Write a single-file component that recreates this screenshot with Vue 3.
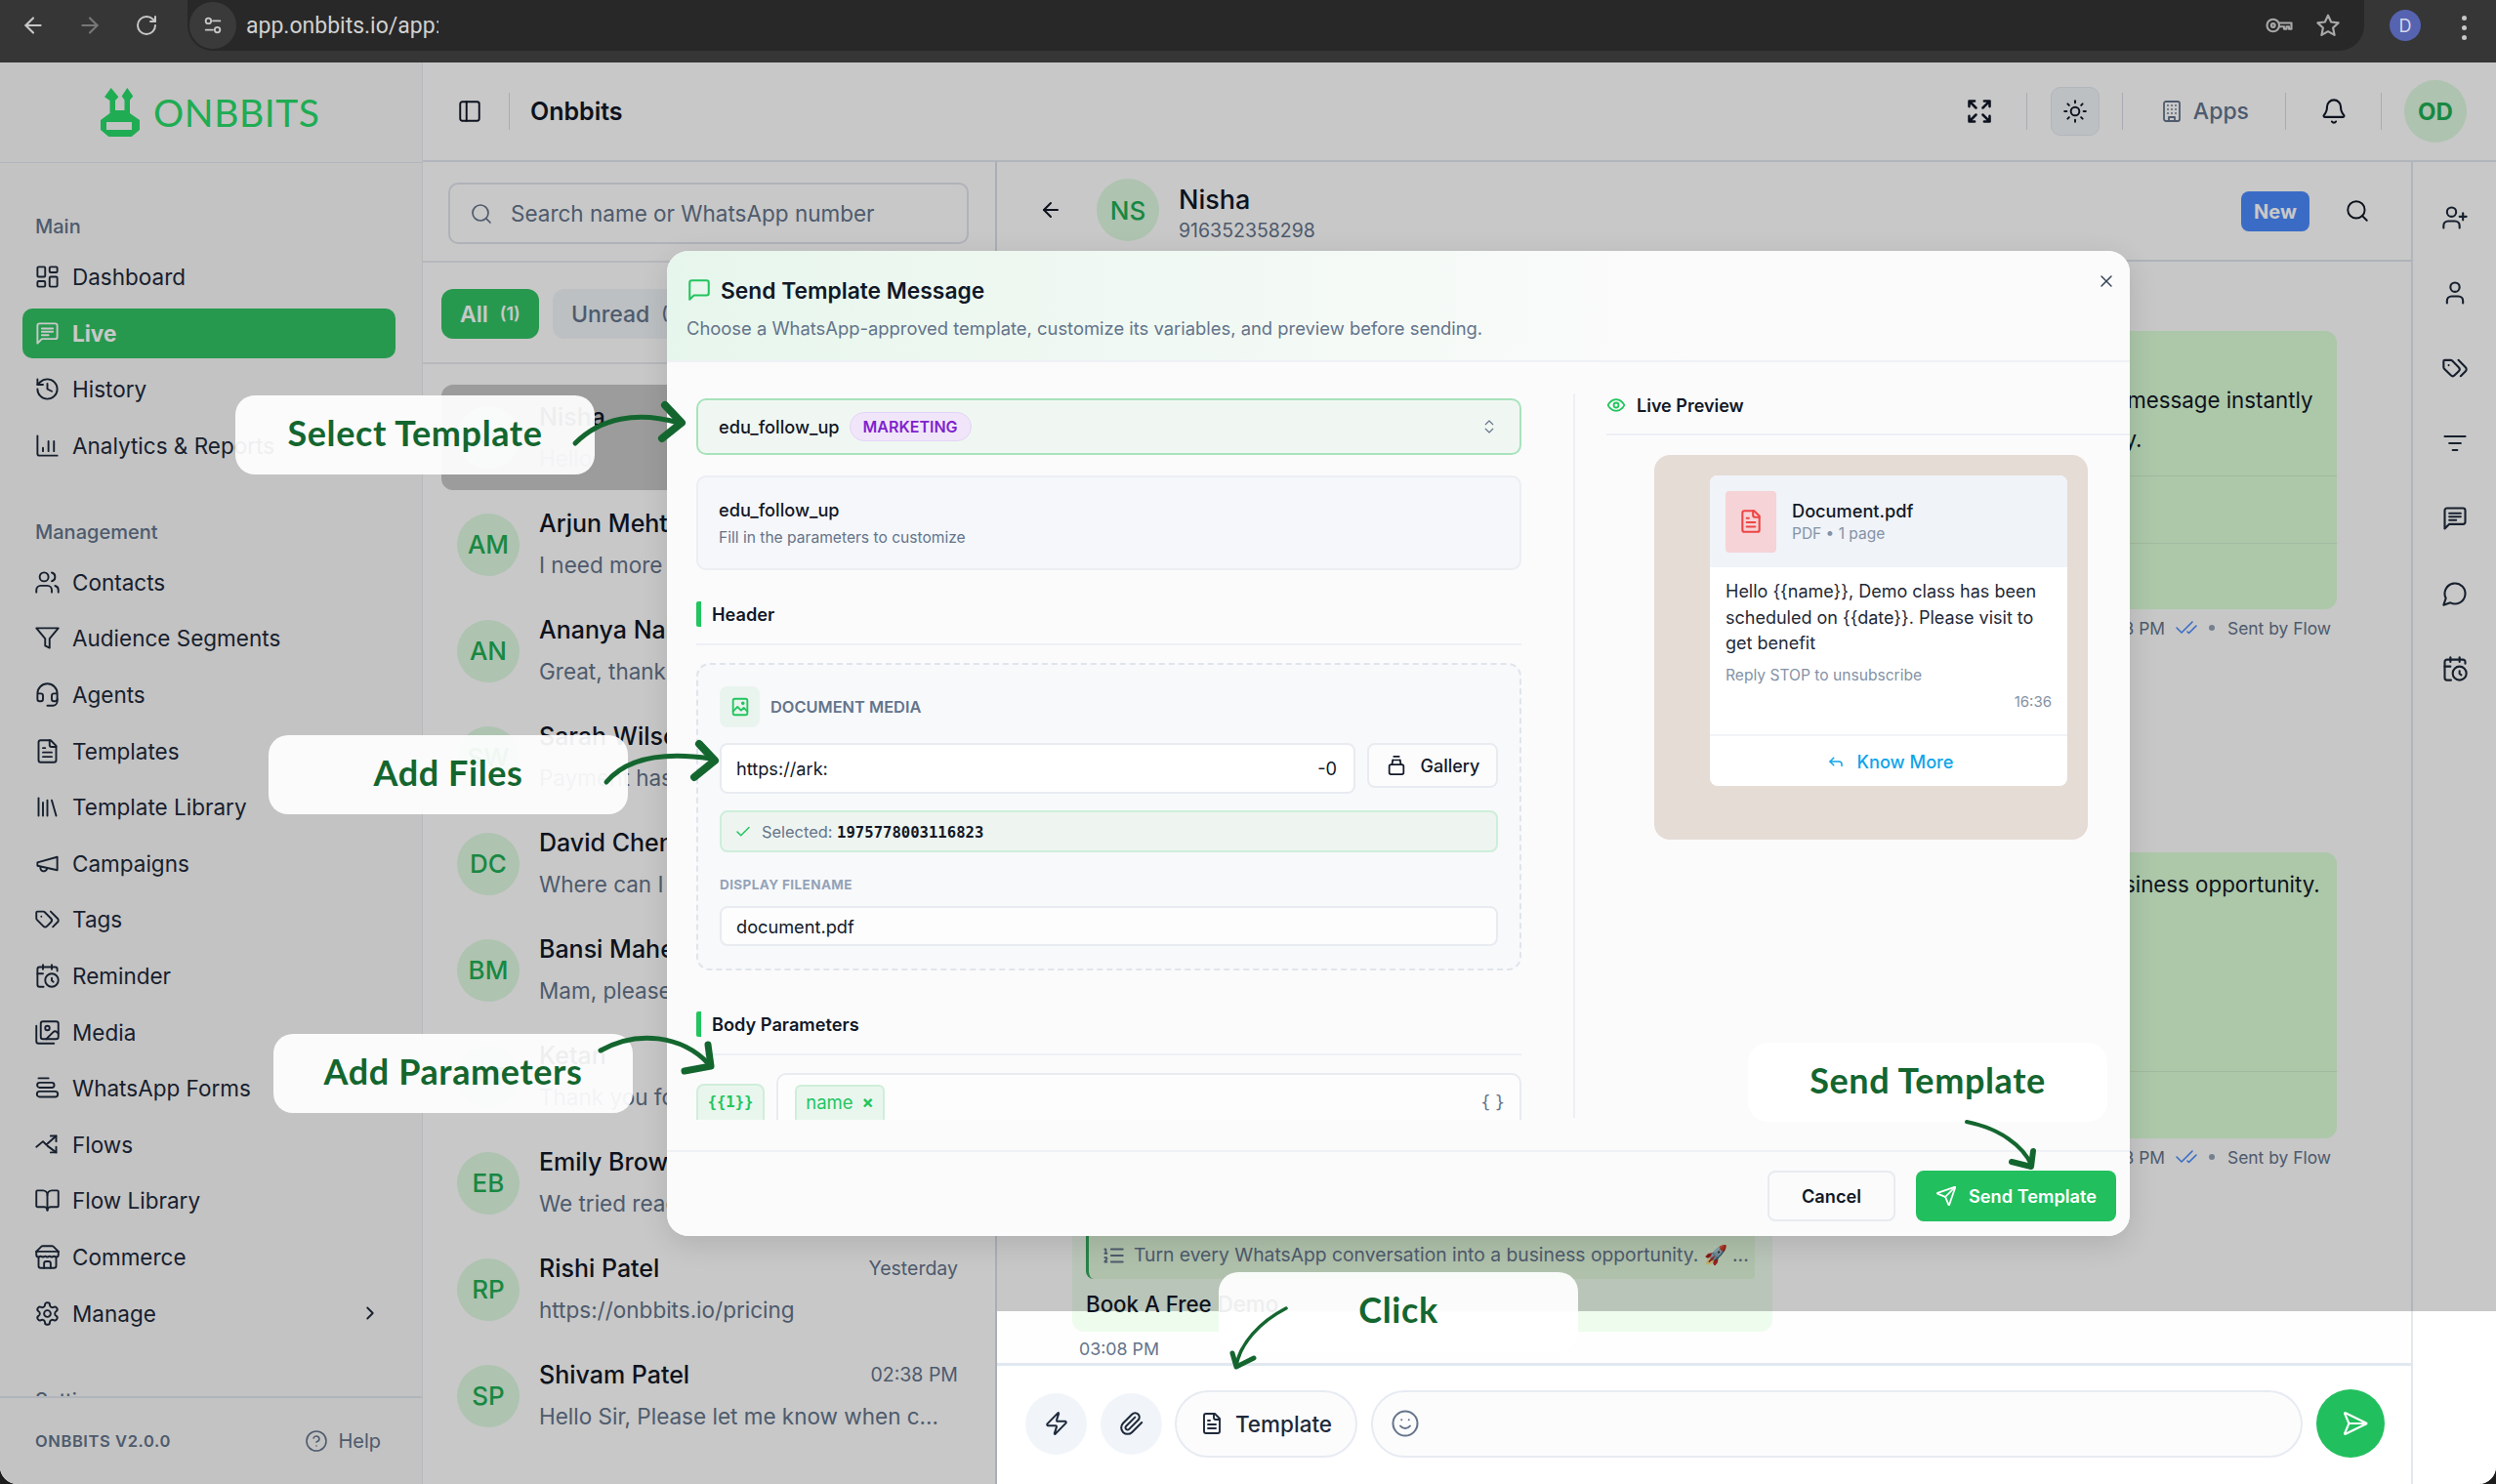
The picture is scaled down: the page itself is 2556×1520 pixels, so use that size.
<script setup>
import { h } from 'vue';

// circle as a path, keeps the icon table flat
const c = (x, y, r) => `M${x - r} ${y}a${r} ${r} 0 1 0 ${r * 2} 0a${r} ${r} 0 1 0 ${-r * 2} 0`;

const ICONS = {
  dashboard: ['M4 3h5a1 1 0 0 1 1 1v7a1 1 0 0 1-1 1H4a1 1 0 0 1-1-1V4a1 1 0 0 1 1-1z', 'M15 3h5a1 1 0 0 1 1 1v3a1 1 0 0 1-1 1h-5a1 1 0 0 1-1-1V4a1 1 0 0 1 1-1z', 'M15 12h5a1 1 0 0 1 1 1v7a1 1 0 0 1-1 1h-5a1 1 0 0 1-1-1v-7a1 1 0 0 1 1-1z', 'M4 16h5a1 1 0 0 1 1 1v3a1 1 0 0 1-1 1H4a1 1 0 0 1-1-1v-3a1 1 0 0 1 1-1z'],
  live: ['M21 15a2 2 0 0 1-2 2H7l-4 4V5a2 2 0 0 1 2-2h14a2 2 0 0 1 2 2z', 'M7 7.5h10', 'M7 10.5h10', 'M7 13.5h6'],
  history: ['M3 12a9 9 0 1 0 9-9 9.75 9.75 0 0 0-6.74 2.74L3 8', 'M3 3v5h5', 'M12 7v5l4 2'],
  chart: ['M3 3v16a2 2 0 0 0 2 2h16', 'M8 17v-3', 'M13 17V8', 'M18 17v-9'],
  users: ['M16 21v-2a4 4 0 0 0-4-4H6a4 4 0 0 0-4 4v2', c(9, 7, 4), 'M22 21v-2a4 4 0 0 0-3-3.87', 'M16 3.13a4 4 0 0 1 0 7.75'],
  funnel: ['M22 3H2l8 9.46V19l4 2v-8.54L22 3z'],
  headset: ['M3 11h3a2 2 0 0 1 2 2v3a2 2 0 0 1-2 2H5a2 2 0 0 1-2-2v-5Zm0 0a9 9 0 1 1 18 0m0 0v5a2 2 0 0 1-2 2h-1a2 2 0 0 1-2-2v-3a2 2 0 0 1 2-2h3Z', 'M21 16v2a4 4 0 0 1-4 4h-5'],
  file: ['M15 2H6a2 2 0 0 0-2 2v16a2 2 0 0 0 2 2h12a2 2 0 0 0 2-2V7Z', 'M14 2v4a2 2 0 0 0 2 2h4', 'M10 9H8', 'M16 13H8', 'M16 17H8'],
  library: ['m16 6 4 14', 'M12 6v14', 'M8 8v12', 'M4 4v16'],
  megaphone: ['m3 11 18-5v12L3 14v-3z', 'M11.6 16.8a3 3 0 1 1-5.8-1.6'],
  tags: ['m15 5 6.3 6.3a2.4 2.4 0 0 1 0 3.4L17 19', 'M9.586 5.586A2 2 0 0 0 8.172 5H3a1 1 0 0 0-1 1v5.172a2 2 0 0 0 .586 1.414L8.29 18.29a2.426 2.426 0 0 0 3.42 0l3.58-3.58a2.426 2.426 0 0 0 0-3.42z', 'M6.5 9.5h.01'],
  calendar: ['M21 7.5V6a2 2 0 0 0-2-2H5a2 2 0 0 0-2 2v14a2 2 0 0 0 2 2h3.5', 'M16 2v4', 'M8 2v4', 'M3 10h5', 'M17.5 17.5 16 16.3V14', c(16, 16, 6)],
  images: ['M18 22H4a2 2 0 0 1-2-2V6', 'm22 13-1.296-1.296a2.41 2.41 0 0 0-3.408 0L11 18', c(12, 8, 2), 'M8 2h12a2 2 0 0 1 2 2v12a2 2 0 0 1-2 2H8a2 2 0 0 1-2-2V4a2 2 0 0 1 2-2z'],
  forms: ['M4 3h9', 'M5 7h11a2 2 0 0 1 0 4.5H5A2 2 0 0 1 5 7z', 'M5 15h14a2 2 0 0 1 0 5H5a2 2 0 0 1 0-5z'],
  flows: ['M2 14l6-5 3 3 9-8', 'M15 4h5v5', 'M12 13l8 6', 'M20 14v5h-5'],
  book: ['M12 7v14', 'M3 18a1 1 0 0 1-1-1V4a1 1 0 0 1 1-1h5a4 4 0 0 1 4 4 4 4 0 0 1 4-4h5a1 1 0 0 1 1 1v13a1 1 0 0 1-1 1h-6a3 3 0 0 0-3 3 3 3 0 0 0-3-3z'],
  store: ['m2 7 4.41-4.41A2 2 0 0 1 7.83 2h8.34a2 2 0 0 1 1.42.59L22 7', 'M4 12v8a2 2 0 0 0 2 2h12a2 2 0 0 0 2-2v-8', 'M15 22v-4a2 2 0 0 0-2-2h-2a2 2 0 0 0-2 2v4', 'M2 7h20', 'M22 7v3a2 2 0 0 1-2 2a2.7 2.7 0 0 1-1.59-.63.7.7 0 0 0-.82 0A2.7 2.7 0 0 1 16 12a2.7 2.7 0 0 1-1.59-.63.7.7 0 0 0-.82 0A2.7 2.7 0 0 1 12 12a2.7 2.7 0 0 1-1.59-.63.7.7 0 0 0-.82 0A2.7 2.7 0 0 1 8 12a2.7 2.7 0 0 1-1.59-.63.7.7 0 0 0-.82 0A2.7 2.7 0 0 1 4 12a2 2 0 0 1-2-2V7'],
  settings: ['M12.22 2h-.44a2 2 0 0 0-2 2v.18a2 2 0 0 1-1 1.73l-.43.25a2 2 0 0 1-2 0l-.15-.08a2 2 0 0 0-2.73.73l-.22.38a2 2 0 0 0 .73 2.73l.15.1a2 2 0 0 1 1 1.72v.51a2 2 0 0 1-1 1.74l-.15.09a2 2 0 0 0-.73 2.73l.22.38a2 2 0 0 0 2.73.73l.15-.08a2 2 0 0 1 2 0l.43.25a2 2 0 0 1 1 1.73V20a2 2 0 0 0 2 2h.44a2 2 0 0 0 2-2v-.18a2 2 0 0 1 1-1.73l.43-.25a2 2 0 0 1 2 0l.15.08a2 2 0 0 0 2.73-.73l.22-.39a2 2 0 0 0-.73-2.73l-.15-.08a2 2 0 0 1-1-1.74v-.5a2 2 0 0 1 1-1.74l.15-.09a2 2 0 0 0 .73-2.73l-.22-.38a2 2 0 0 0-2.73-.73l-.15.08a2 2 0 0 1-2 0l-.43-.25a2 2 0 0 1-1-1.73V4a2 2 0 0 0-2-2z', c(12, 12, 3)],
  chevronRight: ['m9 18 6-6-6-6'],
  help: [c(12, 12, 10), 'M9.09 9a3 3 0 0 1 5.83 1c0 2-3 3-3 3', 'M12 17h.01'],
  search: [c(11, 11, 8), 'm21 21-4.3-4.3'],
  arrowLeft: ['m12 19-7-7 7-7', 'M19 12H5'],
  panel: ['M5 3h14a2 2 0 0 1 2 2v14a2 2 0 0 1-2 2H5a2 2 0 0 1-2-2V5a2 2 0 0 1 2-2z', 'M9 3v18'],
  expand: ['m21 21-6-6m6 6v-4.8m0 4.8h-4.8', 'M3 16.2V21m0 0h4.8M3 21l6-6', 'M21 7.8V3m0 0h-4.8M21 3l-6 6', 'M3 7.8V3m0 0h4.8M3 3l6 6'],
  sun: [c(12, 12, 4), 'M12 2v2', 'M12 20v2', 'm4.93 4.93 1.41 1.41', 'm17.66 17.66 1.41 1.41', 'M2 12h2', 'M20 12h2', 'm6.34 17.66-1.41 1.41', 'm19.07 4.93-1.41 1.41'],
  building: ['M6 2h12a2 2 0 0 1 2 2v16a2 2 0 0 1-2 2H6a2 2 0 0 1-2-2V4a2 2 0 0 1 2-2z', 'M9 22v-4h6v4', 'M8 6h.01', 'M16 6h.01', 'M12 6h.01', 'M12 10h.01', 'M12 14h.01', 'M16 10h.01', 'M16 14h.01', 'M8 10h.01', 'M8 14h.01'],
  bell: ['M10.268 21a2 2 0 0 0 3.464 0', 'M3.262 15.326A1 1 0 0 0 4 17h16a1 1 0 0 0 .74-1.673C19.41 13.956 18 12.499 18 8A6 6 0 0 0 6 8c0 4.499-1.411 5.956-2.738 7.326'],
  userPlus: ['M16 21v-2a4 4 0 0 0-4-4H6a4 4 0 0 0-4 4v2', c(9, 7, 4), 'M19 8v6', 'M22 11h-6'],
  user: ['M19 21v-2a4 4 0 0 0-4-4H9a4 4 0 0 0-4 4v2', c(12, 7, 4)],
  filter: ['M3 6h18', 'M7 12h10', 'M10 18h4'],
  chat: ['M7.9 20A9 9 0 1 0 4 16.1L2 22Z'],
  message: ['M21 15a2 2 0 0 1-2 2H7l-4 4V5a2 2 0 0 1 2-2h14a2 2 0 0 1 2 2z'],
  chevrons: ['m7 15 5 5 5-5', 'm7 9 5-5 5 5'],
  close: ['M18 6 6 18', 'm6 6 12 12'],
  check: ['M20 6 9 17l-5-5'],
  checks: ['M18 6 7 17l-5-5', 'm22 10-7.5 7.5L13 16'],
  eye: ['M2 12s3-7 10-7 10 7 10 7-3 7-10 7-10-7-10-7Z', c(12, 12, 3)],
  image: ['M6 3h12a2 2 0 0 1 2 2v14a2 2 0 0 1-2 2H6a2 2 0 0 1-2-2V5a2 2 0 0 1 2-2z', 'M4 17l5-5 4 4 3-3 4 4', c(15, 8, 1)],
  jar: ['M6 11h12a2 2 0 0 1 2 2v7a2 2 0 0 1-2 2H6a2 2 0 0 1-2-2v-7a2 2 0 0 1 2-2z', 'M7 11l1-5', 'M17 11l-1-5', 'M8 6h8', 'M9 2h6'],
  reply: ['M20 18v-2a4 4 0 0 0-4-4H4', 'M9 17l-5-5 5-5'],
  send: ['M14.536 21.686a.5.5 0 0 0 .937-.024l6.5-19a.496.496 0 0 0-.635-.635l-19 6.5a.5.5 0 0 0-.024.937l7.93 3.18a2 2 0 0 1 1.112 1.11z', 'M21.854 2.147l-10.94 10.939'],
  bolt: ['M4 14a1 1 0 0 1-.78-1.63l9.9-10.2a.5.5 0 0 1 .86.46l-1.92 6.02A1 1 0 0 0 13 10h7a1 1 0 0 1 .78 1.63l-9.9 10.2a.5.5 0 0 1-.86-.46l1.92-6.02A1 1 0 0 0 11 14z'],
  clip: ['m21.44 11.05-9.19 9.19a6 6 0 0 1-8.49-8.49l8.57-8.57A4 4 0 1 1 18 8.84l-8.59 8.57a2 2 0 0 1-2.83-2.83l8.49-8.48'],
  smile: [c(12, 12, 10), 'M8 14s1.5 2 4 2 4-2 4-2', 'M9 9h.01', 'M15 9h.01'],
  ordered: ['M10 12h11', 'M10 18h11', 'M10 6h11', 'M4 10h2', 'M4 6h1v4', 'M6 18H4c0-1 2-2 2-3s-1-1.5-2-1'],
  reload: ['M21 12a9 9 0 1 1-9-9c2.52 0 4.93 1 6.74 2.74L21 8', 'M21 3v5h-5'],
  arrowRight: ['M5 12h14', 'm12 5 7 7-7 7'],
  tune: ['M12 7h8', 'M4 17h8', c(7, 7, 3), c(17, 17, 3)],
  key: [c(7, 12, 5), c(7, 12, 1.5), 'M12 10h10v5h-2v-2h-2v2h-2v-2h-4'],
  star: ['M12 2.5l2.9 6.3 6.9.8-5.1 4.7 1.4 6.8-6.1-3.4-6.1 3.4 1.4-6.8L2.2 9.6l6.9-.8z'],
};

const Ico = (props) =>
  h(
    'svg',
    {
      width: props.size || 24,
      height: props.size || 24,
      viewBox: '0 0 24 24',
      fill: 'none',
      stroke: 'currentColor',
      'stroke-width': props.sw || 2,
      'stroke-linecap': 'round',
      'stroke-linejoin': 'round',
    },
    ICONS[props.name].map((d) => h('path', { d })),
  );
Ico.props = ['name', 'size', 'sw'];

const menuMain = [
  { label: 'Dashboard', icon: 'dashboard' },
  { label: 'Live', icon: 'live', active: true },
  { label: 'History', icon: 'history' },
  { label: 'Analytics & Reports', icon: 'chart' },
];
const menuManage = [
  { label: 'Contacts', icon: 'users' },
  { label: 'Audience Segments', icon: 'funnel' },
  { label: 'Agents', icon: 'headset' },
  { label: 'Templates', icon: 'file' },
  { label: 'Template Library', icon: 'library' },
  { label: 'Campaigns', icon: 'megaphone' },
  { label: 'Tags', icon: 'tags' },
  { label: 'Reminder', icon: 'calendar' },
  { label: 'Media', icon: 'images' },
  { label: 'WhatsApp Forms', icon: 'forms' },
  { label: 'Flows', icon: 'flows' },
  { label: 'Flow Library', icon: 'book' },
  { label: 'Commerce', icon: 'store' },
  { label: 'Manage', icon: 'settings', more: true },
];

const chats = [
  { ini: 'NS', name: 'Nisha', text: 'Hello', time: '03:08 PM', selected: true },
  { ini: 'AM', name: 'Arjun Mehta', text: 'I need more details', time: '03:02 PM' },
  { ini: 'AN', name: 'Ananya Nair', text: 'Great, thank you!', time: '02:58 PM' },
  { ini: 'SW', name: 'Sarah Wilson', text: 'Payment has been done', time: '02:55 PM' },
  { ini: 'DC', name: 'David Chen', text: 'Where can I find it?', time: '02:51 PM' },
  { ini: 'BM', name: 'Bansi Mahera', text: 'Mam, please call me', time: '02:49 PM' },
  { ini: 'KT', name: 'Ketan', text: 'Thank you for the update', time: '02:47 PM' },
  { ini: 'EB', name: 'Emily Brown', text: 'We tried reaching you', time: '02:44 PM' },
  { ini: 'RP', name: 'Rishi Patel', text: 'https://onbbits.io/pricing', time: 'Yesterday' },
  { ini: 'SP', name: 'Shivam Patel', text: 'Hello Sir, Please let me know when c...', time: '02:38 PM' },
];

const railIcons = ['userPlus', 'user', 'tags', 'filter', 'live', 'chat', 'calendar'];
</script>

<template>
  <div class="page">
    <div class="chrome">
      <span class="nav-ico"><Ico name="arrowLeft" :size="26" /></span>
      <span class="nav-ico faded"><Ico name="arrowRight" :size="26" /></span>
      <span class="nav-ico"><Ico name="reload" :size="24" /></span>
      <div class="url-pill">
        <span class="site-btn"><Ico name="tune" :size="22" /></span>
        <span class="url-text">app.onbbits.io/app:</span>
        <span class="pill-ico first"><Ico name="key" :size="30" :sw="1.7" /></span>
        <span class="pill-ico"><Ico name="star" :size="26" /></span>
      </div>
      <span class="profile">D</span>
      <span class="dots"><i></i><i></i><i></i></span>
    </div>

    <div class="app">
      <aside class="sidebar">
        <div class="logo">
          <svg width="40" height="50" viewBox="0 0 40 50">
            <path class="logo-fill" d="M10.7 0L18.3 9.3L15 13V24H9.5V13L4 9.3ZM27.3 0L33.3 8.5L30 12.5V24H24.5V12.5L21.7 8.5ZM9.5 23H30V26L40 33V43L31.7 50H8.3L0 43V33L9.5 26Z" />
            <rect x="6" y="35" width="26" height="8" fill="#f9f9f9" />
          </svg>
          <span class="logo-text">ONBBITS</span>
        </div>
        <nav class="nav">
          <div class="nav-label">Main</div>
          <div v-for="m in menuMain" :key="m.label" class="nav-item" :class="{ active: m.active }">
            <Ico :name="m.icon" :size="27" :sw="1.7" />
            <span>{{ m.label }}</span>
          </div>
          <div class="nav-label second">Management</div>
          <div v-for="m in menuManage" :key="m.label" class="nav-item">
            <Ico :name="m.icon" :size="27" :sw="1.7" />
            <span>{{ m.label }}</span>
            <span v-if="m.more" class="more"><Ico name="chevronRight" :size="22" /></span>
          </div>
          <div class="nav-label second">Settings</div>
        </nav>
        <div class="side-foot">
          <span class="version">ONBBITS V2.0.0</span>
          <span class="help"><Ico name="help" :size="24" :sw="1.6" />Help</span>
        </div>
      </aside>

      <div class="main">
        <header class="topbar">
          <Ico name="panel" :size="26" :sw="1.8" />
          <i class="top-div"></i>
          <span class="brand">Onbbits</span>
          <span class="top-right">
            <Ico name="expand" :size="28" :sw="2.2" />
            <i class="sep s1"></i>
            <span class="sun"><Ico name="sun" :size="26" :sw="1.8" /></span>
            <i class="sep s2"></i>
            <span class="apps"><Ico name="building" :size="24" :sw="1.8" />Apps</span>
            <i class="sep s3"></i>
            <Ico name="bell" :size="28" :sw="1.8" />
            <i class="sep s4"></i>
            <span class="me">OD</span>
          </span>
        </header>

        <div class="content">
          <section class="list">
            <div class="list-search">
              <div class="search-box">
                <Ico name="search" :size="24" :sw="1.7" />
                <span>Search name or WhatsApp number</span>
              </div>
            </div>
            <div class="tabs">
              <span class="tab on">All <small>(1)</small></span>
              <span class="tab">Unread <small>(0)</small></span>
            </div>
            <div class="rows">
              <div v-for="ch in chats" :key="ch.ini" class="row" :class="{ sel: ch.selected }">
                <span class="avatar">{{ ch.ini }}</span>
                <div class="row-text">
                  <div class="row-top">
                    <span class="row-name">{{ ch.name }}</span>
                    <span class="row-time">{{ ch.time }}</span>
                  </div>
                  <div class="row-sub">{{ ch.text }}</div>
                </div>
              </div>
            </div>
          </section>

          <section class="chat">
            <div class="chat-head">
              <span class="back"><Ico name="arrowLeft" :size="24" /></span>
              <span class="avatar">NS</span>
              <div class="who">
                <div class="who-name">Nisha</div>
                <div class="who-num">916352358298</div>
              </div>
              <span class="new">New</span>
              <span class="head-search"><Ico name="search" :size="26" :sw="1.8" /></span>
            </div>

            <div class="messages">
              <div class="bubble b1">
                <p class="b1-text">Respond to every customer message instantly<br />from one team inbox any day.</p>
                <div class="b-row"></div>
                <div class="b-row"></div>
              </div>
              <div class="meta">
                <span>03:38 PM</span>
                <span class="ticks"><Ico name="checks" :size="24" :sw="1.6" /></span>
                <i class="dot"></i>
                <span>Sent by Flow</span>
              </div>
              <div class="bubble b2">
                <p class="b2-text">Turn every WhatsApp conversation into a business opportunity.</p>
                <div class="b-row"></div>
              </div>
              <div class="meta">
                <span>03:38 PM</span>
                <span class="ticks"><Ico name="checks" :size="24" :sw="1.6" /></span>
                <i class="dot"></i>
                <span>Sent by Flow</span>
              </div>
              <div class="bubble b3">
                <div class="quote">
                  <Ico name="ordered" :size="26" :sw="1.7" />
                  <span>Turn every WhatsApp conversation into a business opportunity. 🚀 ...</span>
                </div>
                <div class="b3-text">Book A Free Demo</div>
              </div>
              <div class="b3-time">03:08 PM</div>
            </div>

            <div class="composer">
              <span class="round"><Ico name="bolt" :size="26" :sw="1.9" /></span>
              <span class="round"><Ico name="clip" :size="26" :sw="1.9" /></span>
              <span class="tpl"><Ico name="file" :size="24" :sw="1.9" />Template</span>
              <div class="type-box"><Ico name="smile" :size="30" :sw="1.6" /></div>
              <span class="send"><Ico name="send" :size="28" :sw="1.9" /></span>
            </div>
          </section>

          <aside class="rail">
            <Ico v-for="r in railIcons" :key="r" :name="r" :size="28" :sw="1.8" />
          </aside>
        </div>
      </div>

      <div class="dim"></div>

      <div class="modal">
        <div class="m-head">
          <div class="m-title">
            <Ico name="message" :size="26" :sw="1.9" />
            <span>Send Template Message</span>
          </div>
          <div class="m-sub">Choose a WhatsApp-approved template, customize its variables, and preview before sending.</div>
          <span class="m-close"><Ico name="close" :size="20" :sw="1.7" /></span>
        </div>

        <div class="m-body">
          <div class="form">
            <div class="select">
              <span>edu_follow_up</span>
              <span class="badge">MARKETING</span>
              <span class="updown"><Ico name="chevrons" :size="18" :sw="1.5" /></span>
            </div>
            <div class="info">
              <div class="info-name">edu_follow_up</div>
              <div class="info-sub">Fill in the parameters to customize</div>
            </div>

            <div class="sec-head">Header</div>
            <div class="media">
              <div class="media-head">
                <span class="media-ico"><Ico name="image" :size="22" :sw="2" /></span>
                <span>DOCUMENT MEDIA</span>
              </div>
              <div class="url-row">
                <div class="url-input">
                  <span class="url-cut">https://ark:</span>
                  <span>-0</span>
                </div>
                <span class="gallery"><Ico name="jar" :size="22" :sw="1.9" />Gallery</span>
              </div>
              <div class="selected">
                <Ico name="check" :size="18" :sw="2" />
                <span>Selected: <b>1975778003116823</b></span>
              </div>
              <div class="file-label">DISPLAY FILENAME</div>
              <div class="file-input">document.pdf</div>
            </div>

            <div class="sec-head body-head">Body Parameters</div>
            <div class="param">
              <span class="param-key">&#123;&#123;1&#125;&#125;</span>
              <div class="param-box">
                <span class="tag">name <em>×</em></span>
                <span class="braces">&#123; &#125;</span>
              </div>
            </div>
          </div>

          <div class="preview">
            <div class="pv-head">
              <Ico name="eye" :size="20" :sw="2.2" />
              <span>Live Preview</span>
            </div>
            <div class="wall">
              <div class="card">
                <div class="doc">
                  <span class="doc-ico"><Ico name="file" :size="26" :sw="1.9" /></span>
                  <div>
                    <div class="doc-name">Document.pdf</div>
                    <div class="doc-meta">PDF • 1 page</div>
                  </div>
                </div>
                <div class="card-body">
                  <p>Hello &#123;&#123;name&#125;&#125;, Demo class has been scheduled on &#123;&#123;date&#125;&#125;. Please visit to get benefit</p>
                  <div class="stop">Reply STOP to unsubscribe</div>
                  <div class="stamp">16:36</div>
                </div>
                <div class="know"><Ico name="reply" :size="18" :sw="2" />Know More</div>
              </div>
            </div>
          </div>
        </div>

        <div class="m-foot">
          <span class="cancel">Cancel</span>
          <span class="submit"><Ico name="send" :size="22" :sw="1.9" />Send Template</span>
        </div>
      </div>

      <div class="pop pop-select">Select Template</div>
      <div class="pop pop-files">Add Files</div>
      <div class="pop pop-params">Add Parameters</div>
      <div class="pop pop-send">Send Template</div>
      <div class="pop pop-click">Click</div>

      <!-- annotation arrows, coordinates are the app area itself -->
      <svg class="marks" width="2556" height="1456" viewBox="0 64 2556 1456" fill="none" stroke="#14662f" stroke-linecap="round" stroke-linejoin="round">
        <path stroke-width="5" d="M589 454C615 428 652 421 695 433" />
        <path stroke-width="8" d="M681 415L698 433L678 449" />
        <path stroke-width="5" d="M621 801C642 776 680 770 728 777" />
        <path stroke-width="8" d="M716 762L732 779L711 796" />
        <path stroke-width="5" d="M615 1076C652 1055 698 1060 726 1090" />
        <path stroke-width="7" d="M725 1070L728 1092L701 1097" />
        <path stroke-width="4" d="M2014 1149C2048 1156 2072 1174 2080 1193" />
        <path stroke-width="6" d="M2082 1179L2080 1195L2060 1190" />
        <path stroke-width="3.5" d="M1317 1340C1290 1354 1270 1376 1266 1399" />
        <path stroke-width="5" d="M1262 1386L1266 1400L1284 1391" />
      </svg>
    </div>
  </div>
</template>

<style scoped>
.page { width: 2556px; height: 1520px; display: flex; flex-direction: column; font-family: Inter, "Noto Sans", sans-serif; color: #111827; overflow: hidden; }
i, em { font-style: normal; }
p { margin: 0; }

.chrome { height: 64px; flex: none; background: #363636; display: flex; align-items: flex-start; color: #c7c7c7; }
.nav-ico { width: 58px; height: 52px; display: flex; align-items: center; justify-content: center; }
.nav-ico:first-child { margin-left: 5px; }
.nav-ico.faded { color: #777; }
.url-pill { margin-left: 13px; width: 2229px; height: 52px; background: #282828; border-radius: 0 0 26px 26px; display: flex; align-items: center; padding: 0 24px 0 2px; box-sizing: border-box; }
.site-btn { width: 48px; height: 48px; border-radius: 50%; background: #3a3a3a; display: flex; align-items: center; justify-content: center; }
.url-text { margin-left: 10px; width: 197px; overflow: hidden; white-space: nowrap; font: 400 23px Roboto, sans-serif; color: #d0d0d0; }
.pill-ico { color: #a8a8a8; display: flex; }
.pill-ico.first { margin-left: auto; margin-right: 22px; }
.profile { margin-left: 26px; margin-top: 10px; width: 32px; height: 32px; border-radius: 50%; background: #5563b0; color: #d4d8ee; font: 400 18px Inter, sans-serif; display: flex; align-items: center; justify-content: center; }
.dots { margin-left: 42px; margin-top: 16px; display: flex; flex-direction: column; gap: 5px; }
.dots i { width: 5px; height: 5px; border-radius: 50%; background: #c7c7c7; }

.app { flex: 1; display: flex; position: relative; min-height: 0; border-radius: 0 0 18px 18px; overflow: hidden; background: #fff; }

.sidebar { width: 433px; flex: none; background: #f9f9f9; border-right: 1px solid #e8ebf0; box-sizing: border-box; display: flex; flex-direction: column; }
.logo { height: 103px; flex: none; box-sizing: border-box; border-bottom: 1px solid #e2e8f0; padding-left: 103px; display: flex; align-items: center; gap: 14px; }
.logo-fill { fill: #28dc6a; }
.logo-text { font: 400 39px Lato, sans-serif; color: #28dc6a; letter-spacing: .6px; }
.nav { flex: 1; min-height: 0; overflow: hidden; padding: 54px 27px 0 23px; }
.nav-label { font-size: 20px; line-height: 22px; font-weight: 500; color: #64748b; padding-left: 13px; margin-bottom: 15px; }
.nav-label.second { margin-top: 52px; }
.nav-item { height: 51px; margin-bottom: 6.6px; display: flex; align-items: center; gap: 12px; padding-left: 12px; border-radius: 10px; font-size: 22.5px; color: #1e293b; }
.nav-item.active { background: #32c465; color: #fff; font-weight: 700; }
.more { margin-left: auto; margin-right: 15px; display: flex; }
.side-foot { height: 90px; flex: none; box-sizing: border-box; border-top: 2px solid #e2e8f0; display: flex; align-items: center; padding: 0 42px 0 36px; justify-content: space-between; }
.version { font-size: 16.5px; font-weight: 600; color: #64748b; letter-spacing: .6px; }
.help { display: flex; align-items: center; gap: 10px; font-size: 20px; color: #64748b; }

.main { flex: 1; min-width: 0; display: flex; flex-direction: column; }
.topbar { height: 102px; flex: none; box-sizing: border-box; border-bottom: 2px solid #e2e8f0; display: flex; align-items: center; padding: 0 30px 0 35px; background: #fff; }
.top-div { width: 1px; height: 38px; background: #d8dde5; margin: 0 21px 0 27px; }
.brand { font-size: 25px; font-weight: 600; }
.top-right { margin-left: auto; display: flex; align-items: center; }
.sep { width: 1px; height: 38px; background: #d8dde5; }
.s1 { margin: 0 24px 0 34px; }
.s2 { margin: 0 38px 0 23px; }
.s3 { margin: 0 35px 0 37px; }
.s4 { margin: 0 23px 0 34px; }
.sun { width: 50px; height: 50px; box-sizing: border-box; background: #f1f5f9; border: 1px solid #e2e8f0; border-radius: 10px; display: flex; align-items: center; justify-content: center; }
.apps { display: flex; align-items: center; gap: 10px; font-size: 23px; font-weight: 500; color: #64748b; }
.me { width: 64px; height: 64px; border-radius: 50%; background: #def9e1; color: #1fae55; font-size: 24px; font-weight: 700; display: flex; align-items: center; justify-content: center; }

.content { flex: 1; min-height: 0; display: flex; }
.list { width: 588px; flex: none; box-sizing: border-box; border-right: 2px solid #d9dfe8; display: flex; flex-direction: column; }
.list-search { height: 103px; flex: none; box-sizing: border-box; border-bottom: 2px solid #e8ebf0; padding: 21px 27px 0 26px; }
.search-box { height: 63px; box-sizing: border-box; border: 2px solid #dfe4ec; border-radius: 10px; display: flex; align-items: center; gap: 18px; padding-left: 20px; font-size: 22.5px; color: #64748b; }
.tabs { height: 104px; flex: none; box-sizing: border-box; border-bottom: 2px solid #e8ebf0; padding: 27px 19px 0; display: flex; gap: 14px; }
.tab { height: 51px; padding: 0 19px; border-radius: 12px; background: #f1f5f9; color: #64748b; font-size: 23px; font-weight: 500; display: flex; align-items: center; gap: 12px; }
.tab small { font-size: 18px; }
.tab.on { background: #32c465; color: #fff; font-weight: 600; min-width: 100px; box-sizing: border-box; }
.rows { padding: 21px 19px 0; }
.row { height: 109px; display: flex; align-items: center; gap: 20px; padding: 0 19px 0 16px; border-radius: 12px; box-sizing: border-box; }
.row.sel { background: #c7c7c7; height: 108px; margin-bottom: 1px; }
.avatar { width: 64px; height: 64px; flex: none; border-radius: 50%; background: #def9e1; color: #1fae55; font-size: 26px; font-weight: 500; display: flex; align-items: center; justify-content: center; }
.row-text { flex: 1; min-width: 0; }
.row-top { display: flex; justify-content: space-between; align-items: center; line-height: 32px; }
.row-name { font-size: 25px; font-weight: 500; color: #111827; }
.row-time { font-size: 19.5px; color: #64748b; }
.row-sub { margin-top: 11px; line-height: 32px; font-size: 22.5px; color: #64748b; white-space: nowrap; }

.chat { flex: 1; min-width: 0; display: flex; flex-direction: column; }
.chat-head { height: 102px; flex: none; box-sizing: border-box; border-bottom: 2px solid #dfe4ec; display: flex; align-items: flex-start; padding: 17px 0 0 43px; background: #fff; }
.back { display: flex; margin-top: 20px; margin-right: 35px; }
.who { margin: 6px 0 0 20px; }
.who-name { font-size: 27px; font-weight: 500; line-height: 32px; }
.who-num { font-size: 19.5px; line-height: 26px; color: #64748b; margin-top: 2px; }
.new { margin-left: auto; margin-top: 13px; width: 70px; height: 41px; border-radius: 8px; background: #4a8afc; color: #fff; font-size: 20px; font-weight: 700; display: flex; align-items: center; justify-content: center; }
.head-search { margin: 20px 42px 0 36px; display: flex; }
.messages { flex: 1; min-height: 0; overflow: hidden; display: flex; flex-direction: column; padding-top: 71px; box-sizing: border-box; background: #fefefe; }
.bubble { border-radius: 12px; align-self: flex-end; margin-right: 76px; background: #dcffd8; box-sizing: border-box; flex: none; display: flex; flex-direction: column; font-size: 22.3px; line-height: 40px; color: #111827; }
.b1 { width: 555px; height: 285px; }
.b1-text { padding: 51px 0 0 44px; height: 148px; box-sizing: border-box; white-space: nowrap; }
.b-row { flex: 1; border-top: 1px solid #cfeecb; }
.b2 { margin-top: 218px; width: 773px; height: 293px; }
.b2-text { padding: 13px 0 0 87px; height: 224px; box-sizing: border-box; white-space: nowrap; }
.meta { align-self: flex-end; margin: 7px 82px 0 0; display: flex; align-items: center; gap: 10px; height: 24px; font-size: 17.4px; color: #64748b; flex: none; }
.ticks { color: #4a8afc; display: flex; }
.dot { width: 6px; height: 6px; border-radius: 50%; background: #94a3b8; margin: 0 3px 0 1px; }
.bubble.b3 { margin: 28px 0 0 77px; align-self: flex-start; width: 717px; height: 139px; background: #eefcee; padding: 15px 18px 0 14px; }
.quote { height: 70px; box-sizing: border-box; background: #dff6db; border-left: 3px solid #32a85c; border-radius: 4px 4px 4px 8px; display: flex; align-items: flex-end; gap: 8px; padding: 0 0 11px 12px; font-size: 19.3px; line-height: 28px; color: #64748b; white-space: nowrap; overflow: hidden; }
.quote svg { flex: none; }
.b3-text { margin-top: 6px; font-weight: 500; }
.b3-time { flex: none; margin: 5px 0 0 84px; font-size: 17.8px; line-height: 26px; color: #64748b; }
.composer { height: 124px; flex: none; box-sizing: border-box; border-top: 3px solid #e2e8f0; background: #fff; display: flex; align-items: center; padding: 0 27px 3px 29px; }
.round { width: 63px; height: 63px; border-radius: 50%; background: #f1f5f9; display: flex; align-items: center; justify-content: center; margin-right: 14px; color: #1e293b; }
.tpl { width: 187px; height: 69px; box-sizing: border-box; border: 2px solid #e7ebf2; border-radius: 35px; background: #fcfcfd; display: flex; align-items: center; justify-content: center; gap: 12px; font-size: 22.5px; font-weight: 500; margin-left: -1px; color: #1e293b; }
.type-box { width: 954px; height: 69px; box-sizing: border-box; border: 2px solid #e7ebf2; border-radius: 35px; background: #fcfcfd; margin-left: 14px; padding-left: 18px; display: flex; align-items: center; color: #64748b; }
.send { width: 70px; height: 70px; border-radius: 50%; background: #22bf5e; color: #fff; display: flex; align-items: center; justify-content: center; margin-left: 14px; }
.send svg { transform: rotate(45deg); }

.rail { width: 87px; flex: none; box-sizing: border-box; border-left: 2px solid #e2e8f0; background: #fff; display: flex; flex-direction: column; align-items: center; padding-top: 43px; gap: 49px; color: #1e293b; }

/* page dim, the composer strip stays out of it */
.dim { position: absolute; inset: 0; background: rgba(0, 0, 0, .216); clip-path: polygon(0 0, 100% 0, 100% 1279px, 1021px 1279px, 1021px 100%, 0 100%); }

.modal { position: absolute; left: 683px; top: 193px; width: 1498px; height: 1009px; border-radius: 22px; background: #fbfbfc; overflow: hidden; display: flex; flex-direction: column; box-shadow: 0 8px 30px rgba(0,0,0,.12); }
.m-head { height: 114px; flex: none; box-sizing: border-box; border-bottom: 2px solid #eef1f5; padding: 25px 0 0 20px; position: relative; background: linear-gradient(90deg, #e7f6ec 0%, #f2f9f4 40%, #fbfbfb 70%); }
.m-title { display: flex; align-items: center; gap: 9px; color: #22c55e; height: 30px; }
.m-title span { font-size: 22.8px; font-weight: 600; color: #111827; }
.m-sub { margin-top: 12px; font-size: 18.4px; line-height: 24px; color: #64748b; }
.m-close { position: absolute; right: 14px; top: 21px; color: #334155; display: flex; }
.m-body { flex: 1; min-height: 0; overflow: hidden; display: flex; align-items: flex-start; padding: 32px 0 0 30px; }
.form { width: 845px; height: 739px; margin-top: 5px; flex: none; overflow: hidden; display: flex; flex-direction: column; }
.select { height: 58px; flex: none; box-sizing: border-box; border: 2px solid #a7e3bb; border-radius: 10px; background: #f0f7f2; display: flex; align-items: center; padding-left: 21px; gap: 10px; font-size: 18.2px; font-weight: 500; }
.badge { height: 30px; padding: 0 13px; border-radius: 15px; box-sizing: border-box; border: 1px solid #e3d3f7; background: #f1e6f9; color: #7e22ce; font-size: 16px; font-weight: 600; display: flex; align-items: center; }
.updown { margin-left: auto; margin-right: 22px; display: flex; color: #64748b; }
.info { margin-top: 21px; height: 97px; flex: none; box-sizing: border-box; border: 2px solid #eceef2; border-radius: 10px; background: #f6f7fa; padding: 20px 21px 0; }
.info-name { font-size: 18.2px; line-height: 26px; font-weight: 500; }
.info-sub { margin-top: 4px; font-size: 15.6px; line-height: 24px; color: #64748b; }
.sec-head { margin-top: 32px; height: 26px; flex: none; border-left: 5px solid #22c55e; padding-left: 11px; font-size: 18.2px; line-height: 26px; font-weight: 600; border-radius: 2px; position: relative; }
.sec-head::after { content: ""; position: absolute; left: -5px; right: 0; top: 43px; height: 2px; background: #edf0f5; }
.media { margin-top: 37px; height: 315px; flex: none; box-sizing: border-box; border: 2px dashed #e0e4eb; border-radius: 14px; background: #f8f9fb; padding: 22px 22px 0; }
.media-head { display: flex; align-items: center; gap: 11px; font-size: 16.4px; font-weight: 600; color: #64748b; }
.media-ico { width: 41px; height: 42px; border-radius: 8px; background: #e9f4ee; color: #22c55e; display: flex; align-items: center; justify-content: center; }
.url-row { margin-top: 16px; display: flex; align-items: flex-start; gap: 12px; }
.url-input { flex: 1; height: 52px; box-sizing: border-box; border: 2px solid #e8ebf0; border-radius: 8px; background: #fff; display: flex; justify-content: space-between; align-items: center; padding: 0 17px 0 15px; font-size: 18.2px; }
.url-cut { width: 95px; overflow: hidden; white-space: nowrap; }
.gallery { width: 134px; height: 46px; box-sizing: border-box; border: 2px solid #e8ebf0; border-radius: 8px; background: #fcfcfd; display: flex; align-items: center; justify-content: center; gap: 14px; font-size: 18px; font-weight: 500; }
.selected { margin-top: 17px; height: 43px; box-sizing: border-box; border: 2px solid #cdeeda; border-radius: 8px; background: #eef5f1; display: flex; align-items: center; gap: 10px; padding-left: 13px; color: #22c55e; }
.selected span { font-size: 16.4px; color: #64748b; }
.selected b { font: 700 15.6px "DejaVu Sans Mono", monospace; color: #111827; }
.file-label { margin-top: 25px; font-size: 13.5px; line-height: 17px; font-weight: 700; color: #94a3b8; letter-spacing: .4px; }
.file-input { margin-top: 13px; height: 41px; box-sizing: border-box; border: 2px solid #e8ebf0; border-radius: 8px; background: #fdfdfe; display: flex; align-items: center; padding-left: 15px; font-size: 18.2px; }
.body-head { margin-top: 42px; }
.param { margin-top: 37px; display: flex; align-items: flex-start; gap: 12px; flex: none; }
.param-key { margin-top: 11px; width: 70px; height: 60px; box-sizing: border-box; border: 2px solid #cfeeda; border-radius: 8px; background: #e9f6ee; color: #22c55e; font: 700 15.5px/34px "DejaVu Sans Mono", monospace; text-align: center; }
.param-box { flex: 1; height: 70px; box-sizing: border-box; border: 2px solid #e8ebf0; border-radius: 10px; padding: 10px 18px 0 17px; display: flex; align-items: flex-start; justify-content: space-between; background: #fdfdfe; }
.tag { width: 92px; height: 40px; box-sizing: border-box; border: 2px solid #cfeeda; border-radius: 6px; background: #e9f6ee; color: #22c55e; font-size: 18.5px; display: flex; align-items: flex-start; line-height: 32px; justify-content: center; gap: 9px; }
.tag em { font-weight: 700; font-size: 18px; }
.braces { font: 400 17px/36px "DejaVu Sans Mono", monospace; letter-spacing: -3px; color: #64748b; }
.preview { margin-left: 53px; width: 570px; height: 742px; flex: none; box-sizing: border-box; border-left: 2px solid #edf0f5; padding-left: 32px; position: relative; }
.pv-head { height: 24px; display: flex; align-items: center; gap: 11px; color: #22c55e; }
.pv-head span { font-size: 18px; font-weight: 600; color: #111827; }
.pv-head::after { content: ""; position: absolute; left: 32px; right: 0; top: 41px; height: 2px; background: #edf0f5; }
.wall { margin: 39px 0 0 49px; width: 444px; height: 394px; box-sizing: border-box; border-radius: 16px; background: #e4dcd5; padding: 21px 21px 0 57px; }
.card { width: 366px; height: 318px; background: #fff; border-radius: 8px; overflow: hidden; display: flex; flex-direction: column; }
.doc { height: 94px; flex: none; background: #f0f3f8; display: flex; align-items: center; gap: 16px; padding-left: 16px; }
.doc-ico { width: 52px; height: 63px; border-radius: 4px; background: #f5d3d6; color: #ef4444; display: flex; align-items: center; justify-content: center; }
.doc-name { font-size: 18.2px; line-height: 26px; font-weight: 500; }
.doc-meta { font-size: 15.5px; line-height: 22px; color: #8492a6; }
.card-body { flex: 1; padding: 12px 16px 0; font-size: 18px; line-height: 26.5px; color: #1f2937; box-sizing: border-box; }
.stop { margin-top: 7px; font-size: 15.6px; line-height: 24px; color: #8492a6; }
.stamp { margin-top: 3px; text-align: right; font-size: 15px; line-height: 24px; color: #8492a6; }
.know { height: 53px; flex: none; border-top: 2px solid #f1f3f6; display: flex; align-items: center; justify-content: center; gap: 12px; font-size: 18.2px; font-weight: 500; color: #0ea5e9; padding-left: 4px; box-sizing: border-box; }
.m-foot { height: 88px; flex: none; box-sizing: border-box; border-top: 2px solid #eef1f5; display: flex; justify-content: flex-end; gap: 21px; padding: 19px 14px 0 0; background: #fbfbfc; }
.cancel { width: 131px; height: 52px; box-sizing: border-box; border: 2px solid #e8ebf0; border-radius: 8px; display: flex; align-items: center; justify-content: center; font-size: 18.2px; font-weight: 600; background: #fbfbfc; }
.submit { width: 205px; height: 52px; border-radius: 8px; background: #22bf5e; color: #fff; font-size: 18.2px; font-weight: 600; display: flex; align-items: center; justify-content: center; gap: 12px; }

.pop { position: absolute; width: 368px; height: 81px; box-sizing: border-box; padding-bottom: 6px; border-radius: 20px; background: rgba(255, 255, 255, .93); display: flex; align-items: center; justify-content: center; font: 700 36px Lato, sans-serif; letter-spacing: .6px; color: #14662f; }
.pop-select { left: 241px; top: 341px; }
.pop-files { left: 275px; top: 689px; }
.pop-params { left: 280px; top: 995px; }
.pop-send { left: 1790px; top: 1004px; }
.pop-click { left: 1248px; top: 1239px; }
.marks { position: absolute; left: 0; top: 0; pointer-events: none; }
</style>

<style>
html, body { margin: 0; background: #1c1c1c; }
</style>
